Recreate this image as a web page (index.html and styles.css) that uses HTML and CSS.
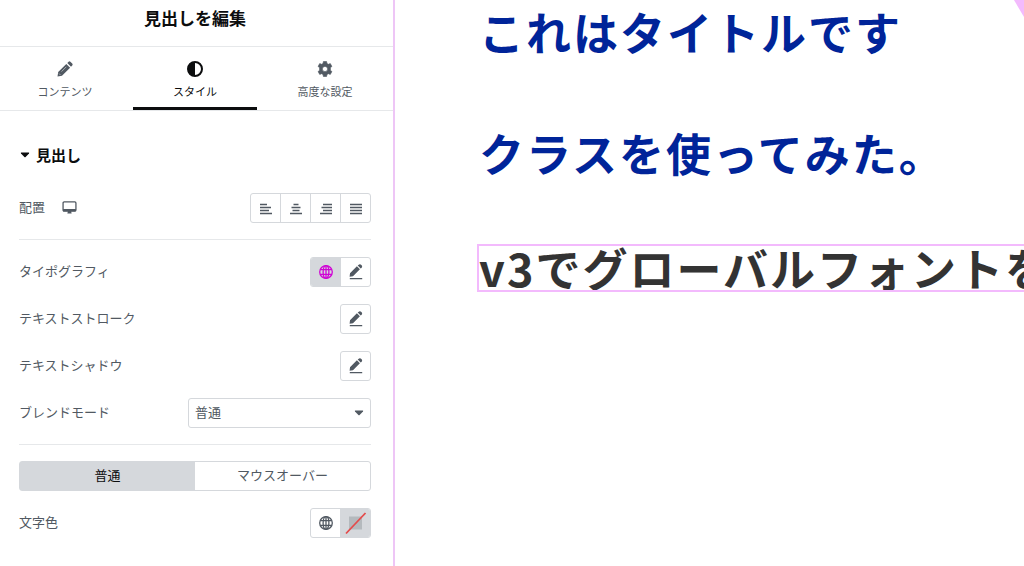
FILE: index.html
```html
<!DOCTYPE html>
<html lang="ja">
<head>
<meta charset="utf-8">
<meta name="viewport" content="width=device-width, initial-scale=1">
<title>見出しを編集</title>
<link rel="stylesheet" href="styles.css">
</head>
<body>
<svg class="sprite" aria-hidden="true">
  <symbol id="pen" viewBox="0 0 16 16">
    <path d="M2 9.200 8.900 2.300l3 3L5 12.200l-3.400.5zM9.700 1.500l.7-.6a2.100 2.100 0 0 1 3 3l-.7.700z"/>
    <path d="M1.800 14h12.400v1.200H1.800z"/>
  </symbol>
  <symbol id="globe" viewBox="0 0 16 16">
    <g fill="none" stroke="currentColor" stroke-width="1.300"><circle cx="8" cy="8" r="6.300"/><ellipse cx="8" cy="8" rx="2.900" ry="6.300"/><path d="M8 1.800v12.400M2.300 5.700h11.400M2.300 10.300h11.400"/></g>
  </symbol>
</svg>
<div class="editor">
  <aside class="panel">
    <header class="panel-header"><h1 class="panel-title">見出しを編集</h1></header>
    <nav class="tabs">
      <button class="tab" type="button">
        <svg class="tab-icon" viewBox="0 0 16 16"><path d="M1.200 11 9.300 2.900l3.800 3.800L5 14.800l-4.500.7zM10.300 2l1.300-1.200a1.300 1.300 0 0 1 1.800 0l1.800 1.800a1.300 1.300 0 0 1 0 1.800L14 5.700z"/><path d="m4.500 10.600 4.800-4.800M2 12.500l1.500 1.500" fill="none" stroke="#fff" stroke-width=".5"/></svg>
        <span>コンテンツ</span>
      </button>
      <button class="tab tab-active" type="button">
        <svg class="tab-icon" viewBox="0 0 16 16"><path fill-rule="evenodd" d="M8 0a8 8 0 1 1 0 16A8 8 0 0 1 8 0zm0 2v12A6 6 0 0 0 8 2z"/></svg>
        <span>スタイル</span>
      </button>
      <button class="tab" type="button">
        <svg class="tab-icon" viewBox="0 0 16 16"><path fill-rule="evenodd" d="M6.400.5h3.200l.4 2 1.300.8 2-.7 1.600 2.800-1.500 1.400v2.400l1.500 1.400-1.600 2.800-2-.7-1.300.8-.4 2H6.400l-.4-2-1.300-.8-2 .7-1.600-2.800 1.500-1.400V6.800L1.100 5.400l1.600-2.800 2 .7L6 2.500zM8 5.400a2.600 2.600 0 1 0 0 5.200 2.600 2.600 0 0 0 0-5.200z" stroke="currentColor" stroke-linejoin="round" stroke-width=".6"/></svg>
        <span>高度な設定</span>
      </button>
    </nav>
    <section class="section">
      <button class="section-toggle" type="button" aria-expanded="true">
        <svg class="caret" viewBox="0 0 10 6"><path d="M1.300.5h7.400q.8.2.3.9L5.600 5q-.6.5-1.200 0L1 1.400Q.5.7 1.300.5z"/></svg>
        <span>見出し</span>
      </button>
      <div class="group">
        <div class="row">
          <span class="label">配置
            <button class="device" type="button" aria-label="デスクトップ"><svg class="device-icon" viewBox="0 0 14 14"><rect x="1" y="1.700" width="12" height="8.600" rx="1" fill="none" stroke="currentColor" stroke-width="1.200"/><path d="M1 8.500h12v2H1zM5.500 10.500h3l.5 2H5z"/></svg></button>
          </span>
          <div class="choices">
            <button class="choice" type="button" aria-label="左"><svg class="icon" viewBox="0 -1 16 16"><path d="M2 3.500h7M2 6.500h11M2 9.500h9M2 12.500h12" class="bars"/></svg></button>
            <button class="choice" type="button" aria-label="中央"><svg class="icon" viewBox="0 -1 16 16"><path d="M5.500 3.500h5M3.500 6.500h9M4.500 9.500h7M2 12.500h12" class="bars"/></svg></button>
            <button class="choice" type="button" aria-label="右"><svg class="icon" viewBox="0 -1 16 16"><path d="M5 3.500h9M3.500 6.500H14M5 9.500h9M2 12.500h12" class="bars"/></svg></button>
            <button class="choice" type="button" aria-label="両端揃え"><svg class="icon" viewBox="0 -1 16 16"><path d="M2 3.500h12M2 6.500h12M2 9.500h12M2 12.500h12" class="bars"/></svg></button>
          </div>
        </div>
      </div>
      <div class="group">
        <div class="row">
          <span class="label">タイポグラフィ</span>
          <div class="choices">
            <button class="choice choice-filled choice-global" type="button" aria-label="グローバル"><svg class="icon"><use href="#globe"/></svg></button>
            <button class="choice" type="button" aria-label="編集"><svg class="icon"><use href="#pen"/></svg></button>
          </div>
        </div>
        <div class="row">
          <span class="label">テキストストローク</span>
          <div class="choices"><button class="choice" type="button" aria-label="編集"><svg class="icon"><use href="#pen"/></svg></button></div>
        </div>
        <div class="row">
          <span class="label">テキストシャドウ</span>
          <div class="choices"><button class="choice" type="button" aria-label="編集"><svg class="icon"><use href="#pen"/></svg></button></div>
        </div>
        <div class="row">
          <label class="label" for="blend">ブレンドモード</label>
          <div class="select-box">
            <select class="select" id="blend"><option>普通</option></select>
            <svg class="caret select-caret" viewBox="0 0 10 6"><path d="M1.300.5h7.400q.8.2.3.9L5.600 5q-.6.5-1.200 0L1 1.400Q.5.7 1.300.5z"/></svg>
          </div>
        </div>
      </div>
      <div class="group">
        <div class="states">
          <button class="state state-active" type="button">普通</button>
          <button class="state" type="button">マウスオーバー</button>
        </div>
        <div class="row">
          <span class="label">文字色</span>
          <div class="choices">
            <button class="choice" type="button" aria-label="グローバル"><svg class="icon"><use href="#globe"/></svg></button>
            <button class="choice choice-filled" type="button" aria-label="色を選択"><svg class="swatch" viewBox="0 0 28 28"><path fill="#b4b9bd" d="M7 7.500h13v13H7z"/><path d="M4 24.500 23.500 4" stroke="#e44b4b" stroke-width="1.800"/></svg></button>
          </div>
        </div>
      </div>
    </section>
  </aside>
  <main class="canvas">
    <svg class="handle" viewBox="0 0 10 17" aria-hidden="true"><path d="M0 0h10v17z"/></svg>
    <h2 class="heading">これはタイトルです</h2>
    <h2 class="heading">クラスを使ってみた。</h2>
    <h2 class="heading heading-selected">v3でグローバルフォントを</h2>
  </main>
</div>
</body>
</html>
```
FILE: styles.css
```css
* { box-sizing: border-box; }
body {
  margin: 0;
  background: #fff;
  color: #515962;
  font: 13px/20px "Noto Sans CJK JP", sans-serif;
}
button, select { font: inherit; color: inherit; margin: 0; padding: 0; border: 0; background: none; }
svg { display: block; fill: currentColor; }
.sprite { position: absolute; width: 0; height: 0; }
.editor { display: flex; min-height: 100vh; overflow: hidden; }
.panel { flex: 0 0 395px; border-right: 2px solid #eec6f6; }
.panel-header { padding: 6px 3px 16px 0; border-bottom: 1px solid #e6e8ea; }
.panel-title { margin: 0; font-size: 17px; line-height: 24px; font-weight: 700; text-align: center; color: #0c0d0e; }
.tabs { display: flex; padding-right: 3px; border-bottom: 1px solid #e6e8ea; }
.tab {
  flex: 1;
  margin: 0 3px;
  padding: 14px 0 6px;
  display: flex;
  flex-direction: column;
  align-items: center;
  gap: 4px;
  font-size: 11px;
  line-height: 20px;
  border-bottom: 3px solid transparent;
}
.tab-active { color: #0c0d0e; border-color: #0c0d0e; }
.tab-icon { width: 16px; height: 16px; }
.section { padding: 34px 22px 0 19px; }
.section-toggle { display: flex; align-items: center; gap: 6px; padding-left: 1px; font-size: 15px; font-weight: 700; color: #0c0d0e; }
.caret { width: 10px; height: 6px; }
.group { display: flex; flex-direction: column; gap: 17px; padding: 17px 0 16px; border-bottom: 1px solid #e6e8ea; }
.section-toggle + .group { padding-top: 28px; }
.group:last-child { padding-top: 16px; border: 0; }
.row { display: flex; align-items: center; justify-content: space-between; }
.label { display: flex; align-items: center; gap: 17px; padding-bottom: 2px; }
.device-icon { width: 15px; height: 15px; }
.choices { display: flex; border: 1px solid #d5d8dc; border-radius: 3px; overflow: hidden; }
.choice { width: 29px; height: 28px; display: grid; place-items: center; }
.choice + .choice { width: 30px; border-left: 1px solid #d5d8dc; }
.choice-filled { background: #d5d8dc; }
.choice-global { color: #d004d4; }
.icon { width: 16px; height: 16px; }
.bars { fill: none; stroke: currentColor; stroke-width: 1.5; }
.swatch { width: 28px; height: 28px; }
.select-box { position: relative; width: 52%; }
.select { appearance: none; display: block; width: 100%; height: 30px; padding: 0 24px 2px 6px; border: 1px solid #d5d8dc; border-radius: 3px; background: #fff; }
.select-caret { position: absolute; right: 7px; top: 12px; pointer-events: none; }
.states { display: flex; border: 1px solid #d5d8dc; border-radius: 3px; }
.state { flex: 1; height: 28px; padding-bottom: 2px; }
.state-active { background: #d5d8dc; color: #0c0d0e; }
.canvas { position: relative; flex: 1; min-width: 0; overflow: hidden; padding: 8px 0 0 84px; }
.heading { margin: 0 0 73px; font-size: 45px; line-height: 48px; letter-spacing: 2px; font-weight: 700; white-space: nowrap; color: #002499; }
.heading-selected { margin: -6px -8px 0 -2px; padding-left: 2px; color: #333; outline: 2px solid #f3bafd; outline-offset: -2px; }
.handle { position: absolute; top: 0; right: 0; width: 10px; height: 17px; fill: #f3bafd; }
```
